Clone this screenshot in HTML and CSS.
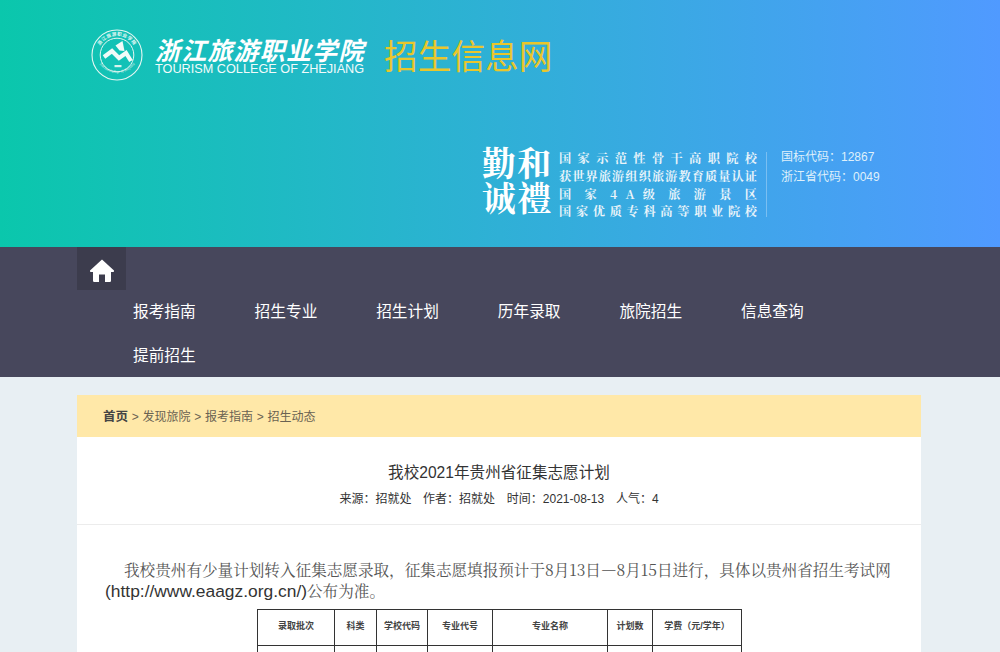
FILE: index.html
```html
<!DOCTYPE html>
<html lang="zh-CN">
<head>
<meta charset="utf-8">
<title>我校2021年贵州省征集志愿计划</title>
<link rel="stylesheet" href="styles.css">
</head>
<body>
<header class="banner">
  <div class="brand">
    <svg class="emblem" viewBox="0 0 52 52" aria-hidden="true">
      <defs>
        <path id="arcTop" d="M6.5 30 A19.8 19.8 0 1 1 45.5 30"/>
        <path id="arcBot" d="M5 27 A21.5 21.5 0 0 0 47 27"/>
      </defs>
      <circle cx="26" cy="26" r="25" fill="none" stroke="#e6f7f3" stroke-width="1.1"/>
      <circle cx="26" cy="26" r="16.8" fill="none" stroke="#e6f7f3" stroke-width="1"/>
      <text class="ring-cn"><textPath href="#arcTop" startOffset="50%" text-anchor="middle">浙江旅游职业学院</textPath></text>
      <text class="ring-en"><textPath href="#arcBot" startOffset="50%" text-anchor="middle">Tourism College of Zhejiang</textPath></text>
      <path d="M13 28 L21 22 L28 29 L35 24 L40 32" fill="none" stroke="#f1fbf8" stroke-width="4.2" stroke-linejoin="miter"/>
      <path d="M24.5 16.5 L31.5 12 L33.5 22 L28.5 21.5 Z" fill="#f1fbf8"/>
      <rect x="23.5" y="36" width="7" height="2.2" fill="#d8f3ee"/>
    </svg>
    <div class="brand-names">
      <div class="brand-cn">浙江旅游职业学院</div>
      <div class="brand-en">TOURISM COLLEGE OF ZHEJIANG</div>
    </div>
    <div class="site-name">招生信息网</div>
  </div>
  <div class="honors">
    <div class="seal">
      <span>勤</span><span>和</span><span>诚</span><span>禮</span>
    </div>
    <div class="honor-list">
      <p>国家示范性骨干高职院校</p>
      <p>获世界旅游组织旅游教育质量认证</p>
      <p>国 家 4 A 级 旅 游 景 区</p>
      <p>国家优质专科高等职业院校</p>
    </div>
    <div class="codes">
      <p>国标代码：12867</p>
      <p>浙江省代码：0049</p>
    </div>
  </div>
</header>

<nav class="nav">
  <div class="nav-inner">
    <a class="home" href="#" aria-label="首页">
      <svg viewBox="0 0 24 24" aria-hidden="true"><path d="M12 1.5 L24 12.6 Q24.2 14 22.6 14 L21 14 L21 22.8 Q21 24 19.8 24 L15 24 L15 16.5 L9 16.5 L9 24 L4.2 24 Q3 24 3 22.8 L3 14 L1.4 14 Q-.2 14 0 12.6 Z" fill="#fff"/></svg>
    </a>
    <ul class="menu">
      <li><a href="#">报考指南</a></li>
      <li><a href="#">招生专业</a></li>
      <li><a href="#">招生计划</a></li>
      <li><a href="#">历年录取</a></li>
      <li><a href="#">旅院招生</a></li>
      <li><a href="#">信息查询</a></li>
      <li><a href="#">提前招生</a></li>
    </ul>
  </div>
</nav>

<main class="page">
  <div class="crumbs"><b>首页</b> &gt; 发现旅院 &gt; 报考指南 &gt; 招生动态</div>
  <article class="article">
    <div class="head">
      <h1>我校2021年贵州省征集志愿计划</h1>
      <div class="meta"><span>来源：招就处</span><span>作者：招就处</span><span>时间：2021-08-13</span><span>人气：4</span></div>
    </div>
    <div class="body">
      <p>我校贵州有少量计划转入征集志愿录取，征集志愿填报预计于8月13日—8月15日进行，具体以贵州省招生考试网<span class="url">(http://www.eaagz.org.cn/)</span>公布为准。</p>
      <table>
        <colgroup>
          <col class="c1"><col class="c2"><col class="c3"><col class="c4"><col class="c5"><col class="c6"><col class="c7">
        </colgroup>
        <tr class="th"><td>录取批次</td><td>科类</td><td>学校代码</td><td>专业代号</td><td>专业名称</td><td>计划数</td><td>学费（元/学年）</td></tr>
        <tr class="row"><td></td><td></td><td></td><td></td><td></td><td></td><td></td></tr>
      </table>
    </div>
  </article>
</main>
</body>
</html>
```
FILE: styles.css
```css
* { box-sizing: border-box; }
html, body { margin: 0; padding: 0; height: 652px; overflow: hidden; }
body { background: #e8eff3; font-family: "Liberation Sans", "Noto Sans CJK SC", sans-serif; color: #333; }
p { margin: 0; }

.banner {
  height: 247px;
  padding: 28px 0 0 91px;
  background: linear-gradient(90deg, #0ac7ac 0%, #2fb0d6 50%, #509aff 100%);
  display: flex;
  flex-direction: column;
}
.brand { display: flex; align-items: center; height: 54px; }
.emblem { width: 52px; height: 52px; flex: none; }
.ring-cn { font-family: "Noto Sans CJK SC", sans-serif; font-size: 4.6px; font-weight: 700; fill: #eefaf7; letter-spacing: 0.5px; }
.ring-en { font-family: "Liberation Serif", serif; font-size: 3.6px; font-style: italic; fill: #e2f6f2; }
.brand-names { margin-left: 12px; width: 210px; color: #fff; }
.brand-cn { font-family: "Noto Sans CJK SC", sans-serif; font-weight: 700; font-size: 25px; line-height: 28px; letter-spacing: 1.2px; white-space: nowrap; font-style: italic; }
.brand-en { font-size: 12.7px; line-height: 13px; white-space: nowrap; color: #f2fbfb; }
.site-name { margin-left: 19px; font-family: "Noto Sans CJK SC", sans-serif; font-size: 33.7px; color: #e9c62c; line-height: 40px; white-space: nowrap; }

.honors { display: flex; margin: 65px 0 0 390px; height: 76px; align-items: flex-start; color: #e9f4fa; }
.seal { width: 71px; height: 70px; flex: none; margin-top: -3px; display: grid; grid-template-columns: 1fr 1fr; font-family: "Noto Serif CJK SC", "Noto Sans CJK SC", serif; font-weight: 700; color: #fff; font-size: 34px; line-height: 35px; text-align: center; }
.seal span { display: block; }
.honor-list { margin: 2px 0 0 7px; width: 198px; font-family: "Noto Serif CJK SC", "Liberation Serif", serif; font-size: 12.2px; line-height: 17.8px; font-weight: 700; }
.honor-list p { white-space: normal; text-align: justify; text-align-last: justify; }
.codes { margin: 5px 0 0 9px; padding-left: 14px; border-left: 1px solid rgba(255,255,255,.3); height: 65px; font-size: 12px; line-height: 20px; color: #dff0fb; white-space: nowrap; }
.codes p:first-child { margin-top: -5px; }

.nav { height: 130px; background: #47475c; }
.nav-inner { width: 846px; margin-left: 77px; }
.home { display: flex; width: 49px; height: 43px; background: #3c3c4d; align-items: center; justify-content: center; }
.home svg { width: 24px; height: 24px; margin-top: 2px; }
.menu { list-style: none; margin: 0; padding: 0 0 0 27px; display: flex; flex-wrap: wrap; }
.menu li { width: 121.6px; height: 44px; }
.menu a { display: block; padding-left: 29px; line-height: 42px; font-size: 15.7px; color: #fff; text-decoration: none; font-family: "Noto Sans CJK SC", sans-serif; white-space: nowrap; }

.page { width: 844px; margin: 18px 0 0 77px; }
.crumbs { height: 42px; padding-left: 26px; background: #ffe8a8; font-size: 12px; line-height: 44px; color: #6a6252; word-spacing: 0.4px; white-space: nowrap; }
.crumbs b { color: #444; font-size: 12.5px; }
.article { background: #fff; height: 300px; }
.head { height: 88px; padding-top: 24px; border-bottom: 1px solid #ececec; text-align: center; }
.head h1 { margin: 0; font-size: 15.6px; font-weight: 400; line-height: 24px; color: #333; }
.meta { margin-top: 5px; font-family: "Liberation Sans", "Noto Sans CJK TC", sans-serif; font-size: 12px; line-height: 18px; color: #333; display: flex; justify-content: center; gap: 11.7px; }
.body { padding: 34px 29px 0 28px; }
.body p { font-family: "Noto Serif CJK SC", "Liberation Serif", "Noto Sans CJK SC", serif; font-size: 15.6px; line-height: 21px; color: #555; text-indent: 19px; }
.url { font-family: "Liberation Sans", sans-serif; font-size: 17.4px; line-height: 1; color: #333; }
table { border-collapse: collapse; table-layout: fixed; width: 484px; margin: 8px 0 0 152px; }
col.c1 { width: 77px; } col.c2 { width: 42px; } col.c3 { width: 51px; } col.c4 { width: 65px; } col.c5 { width: 115px; } col.c6 { width: 45px; } col.c7 { width: 89px; }
td { border: 1px solid #333; padding: 0; text-align: center; font-size: 9px; font-weight: 700; color: #444; white-space: nowrap; }
.th td { height: 36px; padding-bottom: 5px; }
.row td { height: 40px; }
```
